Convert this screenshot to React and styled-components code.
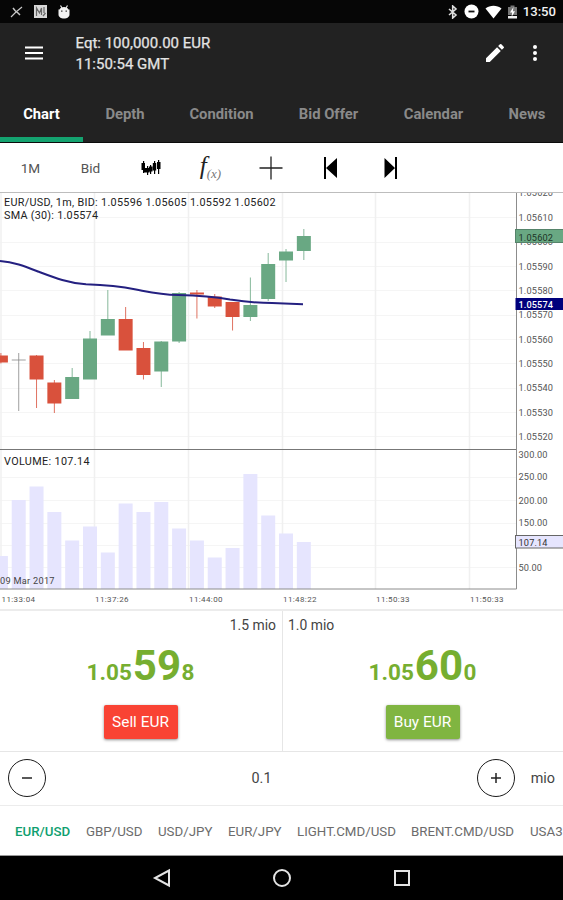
import React from "react";
import styled, { createGlobalStyle } from "styled-components";

const GlobalStyle = createGlobalStyle`
  * { box-sizing: border-box; }
  html, body { margin: 0; padding: 0; background: #fff; }
  body { font-family: Roboto, "Liberation Sans", sans-serif; overflow: hidden; }
  button { font-family: inherit; border: 0; padding: 0; background: none; }
  svg { display: block; }
`;

const Screen = styled.div`
  display: flex;
  flex-direction: column;
  width: 563px;
  height: 900px;
  overflow: hidden;
  background: #fff;
`;

const StatusBar = styled.div`
  display: flex;
  align-items: center;
  justify-content: space-between;
  flex: none;
  height: 23px;
  padding: 0 7px 0 10px;
  background: #060606;
  color: #f2f2f2;
`;

const StatusGroup = styled.div`
  display: flex;
  align-items: center;
  gap: ${(p) => p.$gap}px;
`;

const Clock = styled.span`
  font-size: 13.1px;
  font-weight: 500;
  line-height: 16px;
  padding-top: 1px;
`;

const Header = styled.header`
  display: flex;
  flex-direction: column;
  flex: none;
  height: 120px;
  background: #222;
  border-bottom: 1px solid #0b0b0b;
`;

const AppBar = styled.div`
  display: flex;
  align-items: flex-start;
  height: 65px;
  padding: 10px 8px 0 24px;
`;

const IconSlot = styled.button`
  display: flex;
  align-items: center;
  justify-content: center;
  width: ${(p) => p.$w}px;
  height: 20px;
  margin-top: 10px;
`;

const Account = styled.div`
  flex: 1;
  margin-left: 31.5px;
  color: #e4e4e4;
  font-size: 15px;
  line-height: 21px;
  -webkit-text-stroke: 0.25px #e4e4e4;
`;

const Tabs = styled.nav`
  display: grid;
  grid-template-columns: 83px 84px 109px 105px 105px 82px;
  flex: 1;
  overflow: hidden;
`;

const Tab = styled.div`
  display: flex;
  align-items: center;
  justify-content: center;
  padding-top: 3px;
  border-bottom: 5px solid ${(p) => (p.$active ? "#14a370" : "transparent")};
  color: ${(p) => (p.$active ? "#fff" : "#8a8a8a")};
  font-size: 14.8px;
  font-weight: 700;
  white-space: nowrap;
`;

const Toolbar = styled.div`
  display: grid;
  grid-template-columns: repeat(7, 60px);
  flex: none;
  height: 49px;
  background: #fff;
`;

const Tool = styled.button`
  display: flex;
  align-items: center;
  justify-content: center;
  padding: 0 0 0 1px;
  color: #555;
  font-size: 13.6px;
`;

const ChartPanel = styled.div`
  flex: none;
  height: 417px;
`;

const Quotes = styled.div`
  display: grid;
  grid-template-columns: 283px 280px;
  flex: none;
  height: 143px;
  border-top: 2px solid #ececec;
  border-bottom: 1px solid #e6e6e6;
`;

const Quote = styled.section`
  display: flex;
  flex-direction: column;
  align-items: center;
  padding: 5px 6px 0 5px;
  border-right: ${(p) => (p.$divided ? "1px solid #e6e6e6" : "0")};
`;

const Available = styled.div`
  align-self: ${(p) => p.$side};
  color: #444;
  font-size: 13.9px;
  line-height: 18px;
`;

const Price = styled.div`
  display: flex;
  align-items: baseline;
  height: 52px;
  margin-top: 6px;
  color: #76ae30;
  font-weight: 700;
  line-height: 52px;
`;

const Minor = styled.span`
  font-size: 22.5px;
`;

const Major = styled.span`
  margin: 0 0.5px 0 1px;
  font-size: 42px;
`;

const TradeButton = styled.button`
  width: 74px;
  height: 34px;
  margin-top: 13px;
  border-radius: 2px;
  background: ${(p) => p.$color};
  box-shadow: 0 1px 3px rgba(0, 0, 0, 0.45);
  color: #fff;
  font-size: 15.4px;
  white-space: nowrap;
`;

const AmountRow = styled.div`
  display: flex;
  align-items: center;
  flex: none;
  height: 54px;
  padding: 0 8px 1px 8px;
  border-bottom: 1px solid #ececec;
  color: #444;
  font-size: 14.4px;
`;

const Round = styled.button`
  display: flex;
  align-items: center;
  justify-content: center;
  flex: none;
  width: 38px;
  height: 38px;
  border: 1.5px solid #1c1c1c;
  border-radius: 50%;
`;

const Amount = styled.div`
  flex: 1;
  text-align: center;
`;

const Unit = styled.div`
  width: 40px;
  text-align: right;
`;

const Symbols = styled.div`
  display: flex;
  align-items: center;
  flex: none;
  gap: 15px;
  height: 50px;
  padding: 1px 0 0 15px;
  border-bottom: 1px solid #999;
  overflow: hidden;
`;

const Ticker = styled.span`
  flex: none;
  width: ${(p) => p.$w}px;
  color: ${(p) => (p.$active ? "#0fa070" : "#6c6c6c")};
  font-size: 13.3px;
  font-weight: ${(p) => (p.$active ? 500 : 400)};
  white-space: nowrap;
`;

const NavBar = styled.div`
  display: flex;
  align-items: center;
  justify-content: center;
  flex: 1;
  gap: 96px;
  background: #000;
`;

const tabs = ["Chart", "Depth", "Condition", "Bid Offer", "Calendar", "News"];

const tickers = [
  ["EUR/USD", 56],
  ["GBP/USD", 57],
  ["USD/JPY", 55],
  ["EUR/JPY", 54],
  ["LIGHT.CMD/USD", 99],
  ["BRENT.CMD/USD", 104],
  ["USA3", 33],
];

const GREEN = "#69a883";
const RED = "#d9513c";

// [body top, body bottom, wick top, wick bottom, colour, volume top]
const candles = [
  [355.5, 362.5, 353, 363.5, RED, 556],
  [359.6, 360.4, 353, 411, "#888", 500],
  [355.5, 379.5, 355, 408, RED, 486.5],
  [382.5, 403.5, 380, 413, RED, 512],
  [377, 399, 368, 399, GREEN, 540.5],
  [338.5, 379.5, 331, 379, GREEN, 526.5],
  [319, 335.5, 290, 335, GREEN, 552.5],
  [319, 350.5, 307, 350, RED, 503.5],
  [348, 375, 342, 379.5, RED, 512],
  [341.5, 371.5, 341, 387, GREEN, 502],
  [293, 341.5, 292, 343, GREEN, 528.5],
  [292.5, 294.5, 290, 318.5, RED, 540.5],
  [296.5, 306.5, 294, 308, RED, 557.5],
  [302, 317, 302, 330.5, RED, 548],
  [305, 317, 277.5, 321, GREEN, 474],
  [264, 299, 253, 301, GREEN, 515.5],
  [251.5, 260.5, 249, 282, GREEN, 533.5],
  [236, 251, 229, 260, GREEN, 542],
];

const priceLevels = [
  ["1.05620", 192.5],
  ["1.05610", 217],
  ["1.05600", 241.5],
  ["1.05590", 266],
  ["1.05580", 290],
  ["1.05570", 314.5],
  ["1.05560", 339],
  ["1.05550", 363],
  ["1.05540", 387.5],
  ["1.05530", 412],
  ["1.05520", 436],
];

const volumeLevels = [
  ["300.00", 454],
  ["250.00", 476.5],
  ["200.00", 500],
  ["150.00", 522.5],
  ["50.00", 567],
];

const times = [
  ["11:33:04", 1],
  ["11:37:26", 94.5],
  ["11:44:00", 188.5],
  ["11:48:22", 282.5],
  ["11:50:33", 375.5],
  ["11:50:33", 469.5],
];

const Label = styled.text`
  font-family: Roboto, sans-serif;
  font-size: ${(p) => p.$size}px;
  font-weight: ${(p) => p.$weight || 400};
  fill: ${(p) => p.$fill || "#555"};
`;

function Chart() {
  return (
    <svg width="563" height="417" viewBox="0 192 563 417">
      <g stroke="#f5f5f5" strokeWidth="1">
        {[...priceLevels.slice(1), ...volumeLevels.slice(1), ["", 545]].map(([, y]) => (
          <path key={y} d={`M0 ${Math.round(y) + 0.5}H516`} />
        ))}
      </g>
      <g stroke="#f0f0f0" strokeWidth="1.5">
        {times.map(([, x]) => (
          <path key={x} d={`M${x} 192V589`} />
        ))}
      </g>
      {candles.map(([top, bottom, high, low, color, vol], i) => {
        const x = 0.9 + i * 17.82;
        return (
          <g key={i}>
            <rect x={x - 7} y={vol} width="14" height={589 - vol} fill="#e6e5fe" />
            <path d={`M${x} ${high}V${low}`} stroke={color} strokeWidth="1" opacity="0.8" />
            <rect x={x - 7} y={top} width="14" height={bottom - top} fill={color} />
          </g>
        );
      })}
      <path
        d="M0 261C14 262 24 266 38 271.5C54 277.5 68 283 86 284.3C104 285 118 286 136 289.5C152 292.5 160 294.5 178 295C200 295.5 216 297 230 299.5C244 301.5 256 303 272 303L303 304.2"
        fill="none"
        stroke="#242080"
        strokeWidth="2"
      />
      <path d="M0 449.5H516" stroke="#777" />
      <path d="M0 589H516.5V193" stroke="#8c8c8c" fill="none" />

      {priceLevels.map(([t, y]) => (
        <Label key={t} $size={9.2} x="518.5" y={y + 3.5} textLength="34.5">{t}</Label>
      ))}
      {volumeLevels.map(([t, y]) => (
        <Label key={t} $size={9.2} x="518.5" y={y + 3.5} textLength={t === "50.00" ? 23.5 : 29}>{t}</Label>
      ))}
      <path d="M0 192.5H563" stroke="#bdbdbd" />

      <rect x="515.5" y="229.5" width="48" height="13" fill="#69a883" stroke="#55836a" />
      <Label $size={9.2} $fill="#1d3526" x="518.5" y="240.5" textLength="34.5">1.05602</Label>
      <rect x="515.5" y="298" width="48" height="12" fill="#00007c" />
      <Label $size={9.2} $weight={500} $fill="#fff" x="518.5" y="307.5" textLength="34.5">1.05574</Label>
      <rect x="515.5" y="535.5" width="49" height="12.5" fill="#e6e5fe" stroke="#666" />
      <Label $size={9.2} $fill="#333" x="518.5" y="545.5" textLength="29">107.14</Label>

      <Label $size={10.8} $fill="#222" x="4" y="205.7" textLength="271.5">
        EUR/USD, 1m, BID: 1.05596 1.05605 1.05592 1.05602
      </Label>
      <Label $size={10.8} $fill="#222" x="4" y="218.7" textLength="94">SMA (30): 1.05574</Label>
      <Label $size={10.8} $fill="#222" x="4" y="464.5" textLength="85.5">VOLUME: 107.14</Label>
      <Label $size={9.2} $fill="#444" x="0" y="584" textLength="54.5">09 Mar 2017</Label>
      {times.map(([t, x]) => (
        <Label key={x} $size={8} x={x + 0.5} y="601.5" textLength="33.5">{t}</Label>
      ))}
    </svg>
  );
}

const BrokenIcon = () => (
  <svg width="13" height="14" viewBox="0 0 13 14" fill="none" stroke="#c8c8c8">
    <path d="M1 12L6 7L12 2" strokeWidth="1.2" />
    <path d="M3 3L5 5.500L8 8L10 10" strokeWidth="1.500" />
  </svg>
);

const BadgeIcon = () => (
  <svg width="13" height="13" viewBox="0 0 13 13">
    <rect width="13" height="13" fill="#d8d8d8" />
    <path d="M2.500 11V3L5.500 8L7.500 3V10M10 2V8M9 11L11.500 8" stroke="#666" strokeWidth="1.200" fill="none" />
  </svg>
);

const DroidIcon = () => (
  <svg width="12" height="14" viewBox="0 0 12 14">
    <path d="M2.500 0.500L4 3M9.500 0.500L8 3" stroke="#eee" strokeWidth="1.200" />
    <path d="M0.500 4.500H1.500C2 3 4 2 6 2S10 3 10.500 4.500H11.500V9.500C11.500 12 9 13.500 6 13.500S0.500 12 0.500 9.500Z" fill="#f2f2f2" />
    <path d="M3 6.200H4.500M7.500 6.200H9" stroke="#444" strokeWidth="1.300" />
  </svg>
);

const Bluetooth = () => (
  <svg width="10" height="14" viewBox="0 0 10 14" fill="none" stroke="#ddd" strokeWidth="1.600">
    <path d="M1 4L8 10L4.700 13V1L8 4L1 10" />
  </svg>
);

const Dnd = () => (
  <svg width="15" height="15" viewBox="0 0 15 15">
    <circle cx="7.500" cy="7.500" r="7" fill="#fff" />
    <path d="M4.500 7.500H10.500" stroke="#111" strokeWidth="1.800" />
  </svg>
);

const Wifi = () => (
  <svg width="17" height="14" viewBox="0 0 17 14">
    <path d="M0.500 3.500C5 -0.300 12 -0.300 16.500 3.500L8.500 13.500Z" fill="#fff" />
  </svg>
);

const Battery = () => (
  <svg width="9" height="14" viewBox="0 0 9 14">
    <path d="M0 2H2.500V0.500H6.500V2H9V10H0Z" fill="#777" />
    <path d="M0 11H9V13.500H0Z" fill="#eee" />
    <path d="M5.500 2L2 7.500H4.200L3.500 12L7 6.300H4.900Z" fill="#fff" />
  </svg>
);

const CandleGlyph = () => (
  <svg width="20" height="16" viewBox="0 0 20 16" fill="#000">
    <path d="M2 1H3.200V13H2ZM6 6H7.200V15H6ZM9 5H10.200V14H9ZM13 1H14.200V14H13ZM17 0H18.200V14H17Z" />
    <path d="M0.500 3H4V10H0.500ZM3 8H8.500V12.500H3ZM8 6.500H11.500V11.500H8ZM11.800 3H15.200V10.500H11.800ZM16 2H19.500V9H16Z" />
  </svg>
);

const Formula = styled.span`
  display: flex;
  align-items: baseline;
  color: #222;
  font-family: "Liberation Serif", serif;
  font-style: italic;
  font-size: 25px;
  line-height: 26px;
`;

const Argument = styled.span`
  color: #777;
  font-size: 13px;
  transform: translateY(4px);
`;

export default function App() {
  return (
    <>
      <GlobalStyle />
      <Screen>
        <StatusBar>
          <StatusGroup $gap={11}>
            <BrokenIcon />
            <BadgeIcon />
            <DroidIcon />
          </StatusGroup>
          <StatusGroup $gap={6}>
            <Bluetooth />
            <Dnd />
            <Wifi />
            <Battery />
            <Clock>13:50</Clock>
          </StatusGroup>
        </StatusBar>

        <Header>
          <AppBar>
            <IconSlot $w={20}>
              <svg width="18" height="14" viewBox="0 0 18 14" stroke="#fff" strokeWidth="2">
                <path d="M0 1.500H18M0 7H18M0 12.500H18" />
              </svg>
            </IconSlot>
            <Account>
              Eqt: 100,000.00 EUR
              <br />
              11:50:54 GMT
            </Account>
            <IconSlot $w={40}>
              <svg width="24" height="24" viewBox="0 0 24 24" fill="#fff">
                <path d="M3 17.250V21h3.750L17.810 9.940l-3.750-3.750L3 17.250zM20.710 7.040a1 1 0 0 0 0-1.410l-2.340-2.340a1 1 0 0 0-1.410 0l-1.830 1.830 3.750 3.750 1.830-1.830z" />
              </svg>
            </IconSlot>
            <IconSlot $w={40}>
              <svg width="24" height="24" viewBox="0 0 24 24" fill="#fff">
                <circle cx="12" cy="6" r="2" />
                <circle cx="12" cy="12" r="2" />
                <circle cx="12" cy="18" r="2" />
              </svg>
            </IconSlot>
          </AppBar>
          <Tabs>
            {tabs.map((t, i) => (
              <Tab key={t} $active={i === 0}>{t}</Tab>
            ))}
          </Tabs>
        </Header>

        <Toolbar>
          <Tool>1M</Tool>
          <Tool>Bid</Tool>
          <Tool><CandleGlyph /></Tool>
          <Tool>
            <Formula>f<Argument>(x)</Argument></Formula>
          </Tool>
          <Tool>
            <svg width="24" height="24" viewBox="0 0 24 24" stroke="#222" strokeWidth="1.300">
              <path d="M0.500 12H23.500M12 0.500V23.500" />
            </svg>
          </Tool>
          <Tool>
            <svg width="14" height="22" viewBox="0 0 14 22">
              <path d="M0 0H2V22H0ZM13 1V21L2 11Z" />
            </svg>
          </Tool>
          <Tool>
            <svg width="14" height="22" viewBox="0 0 14 22">
              <path d="M11 0H13V22H11ZM0.500 1V21L11 11Z" />
            </svg>
          </Tool>
        </Toolbar>

        <ChartPanel>
          <Chart />
        </ChartPanel>

        <Quotes>
          <Quote $divided>
            <Available $side="flex-end">1.5 mio</Available>
            <Price>
              <Minor>1.05</Minor>
              <Major>59</Major>
              <Minor>8</Minor>
            </Price>
            <TradeButton $color="#f94334">Sell EUR</TradeButton>
          </Quote>
          <Quote>
            <Available $side="flex-start">1.0 mio</Available>
            <Price>
              <Minor>1.05</Minor>
              <Major>60</Major>
              <Minor>0</Minor>
            </Price>
            <TradeButton $color="#80b541">Buy EUR</TradeButton>
          </Quote>
        </Quotes>

        <AmountRow>
          <Round>
            <svg width="12" height="12" viewBox="0 0 12 12" stroke="#222" strokeWidth="1.500">
              <path d="M1 6H11" />
            </svg>
          </Round>
          <Amount>0.1</Amount>
          <Round>
            <svg width="12" height="12" viewBox="0 0 12 12" stroke="#222" strokeWidth="1.500">
              <path d="M1 6H11M6 1V11" />
            </svg>
          </Round>
          <Unit>mio</Unit>
        </AmountRow>

        <Symbols>
          {tickers.map(([t, w], i) => (
            <Ticker key={t} $w={w} $active={i === 0}>{t}</Ticker>
          ))}
        </Symbols>

        <NavBar>
          <svg width="24" height="24" viewBox="0 0 24 24" fill="none" stroke="#e4e4e4" strokeWidth="2">
            <path d="M19 4.500V19.500L5 12Z" />
          </svg>
          <svg width="24" height="24" viewBox="0 0 24 24" fill="none" stroke="#e4e4e4" strokeWidth="2">
            <circle cx="12" cy="12" r="8" />
          </svg>
          <svg width="24" height="24" viewBox="0 0 24 24" fill="none" stroke="#e4e4e4" strokeWidth="2">
            <rect x="5" y="5" width="14" height="14" />
          </svg>
        </NavBar>
      </Screen>
    </>
  );
}
